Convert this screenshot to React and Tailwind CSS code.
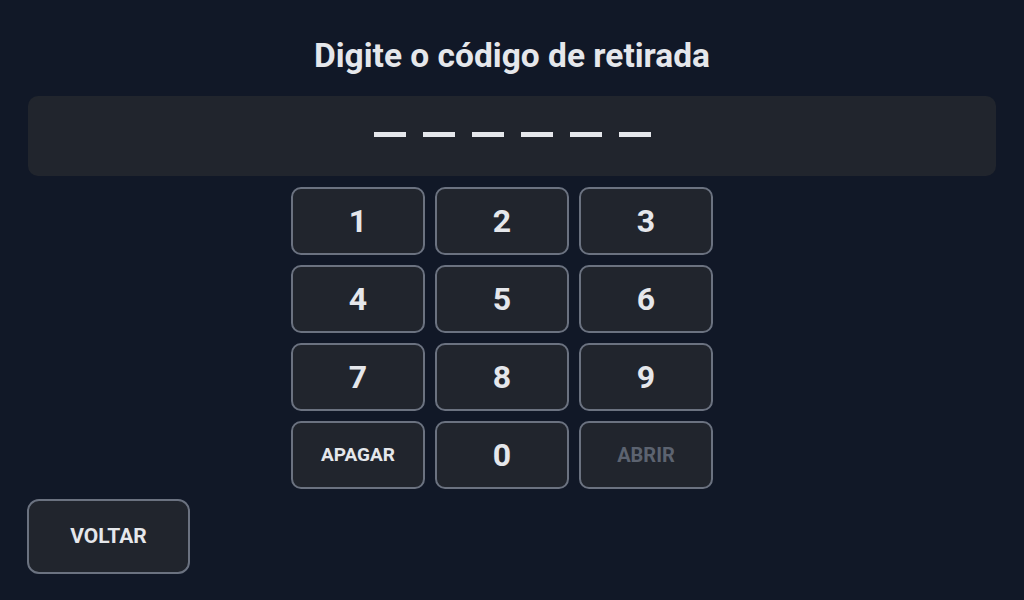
import React from "react";

const keys = ["1", "2", "3", "4", "5", "6", "7", "8", "9"];

function Key({ children, className = "" }) {
  return (
    <button
      className={`h-[68px] w-[134px] rounded-[10px] border-2 border-[#6b7280] bg-[#21252d] flex items-center justify-center font-bold ${className}`}
    >
      {children}
    </button>
  );
}

export default function App() {
  return (
    <div
      className="w-full h-[600px] bg-[#111827] flex flex-col px-7 text-[#e5e7eb] overflow-hidden"
      style={{ fontFamily: "Roboto, 'Liberation Sans', sans-serif" }}
    >
      <h1 className="pt-9 h-[76px] text-center text-[33.5px] leading-10 font-bold">
        Digite o código de retirada
      </h1>
      <div className="mt-5 h-20 rounded-[10px] bg-[#21252d] flex items-center justify-center gap-[17px] pb-[3px]">
        {[0, 1, 2, 3, 4, 5].map((i) => (
          <div key={i} className="w-8 h-[5px] bg-[#e5e7eb]" />
        ))}
      </div>
      <div className="mt-[11px] flex justify-center pr-5">
        <div className="grid grid-cols-[134px_134px_134px] gap-2.5">
          {keys.map((k) => (
            <Key key={k} className="text-[32px]">
              {k}
            </Key>
          ))}
          <Key className="text-[19px]">APAGAR</Key>
          <Key className="text-[32px]">0</Key>
          <Key className="text-[20px] text-[#5c6370]">ABRIR</Key>
        </div>
      </div>
      <div className="mt-2.5 -ml-px">
        <button className="h-[75px] w-[163px] rounded-xl border-2 border-[#6b7280] bg-[#21252d] flex items-center justify-center text-[21px] font-bold">
          VOLTAR
        </button>
      </div>
    </div>
  );
}
